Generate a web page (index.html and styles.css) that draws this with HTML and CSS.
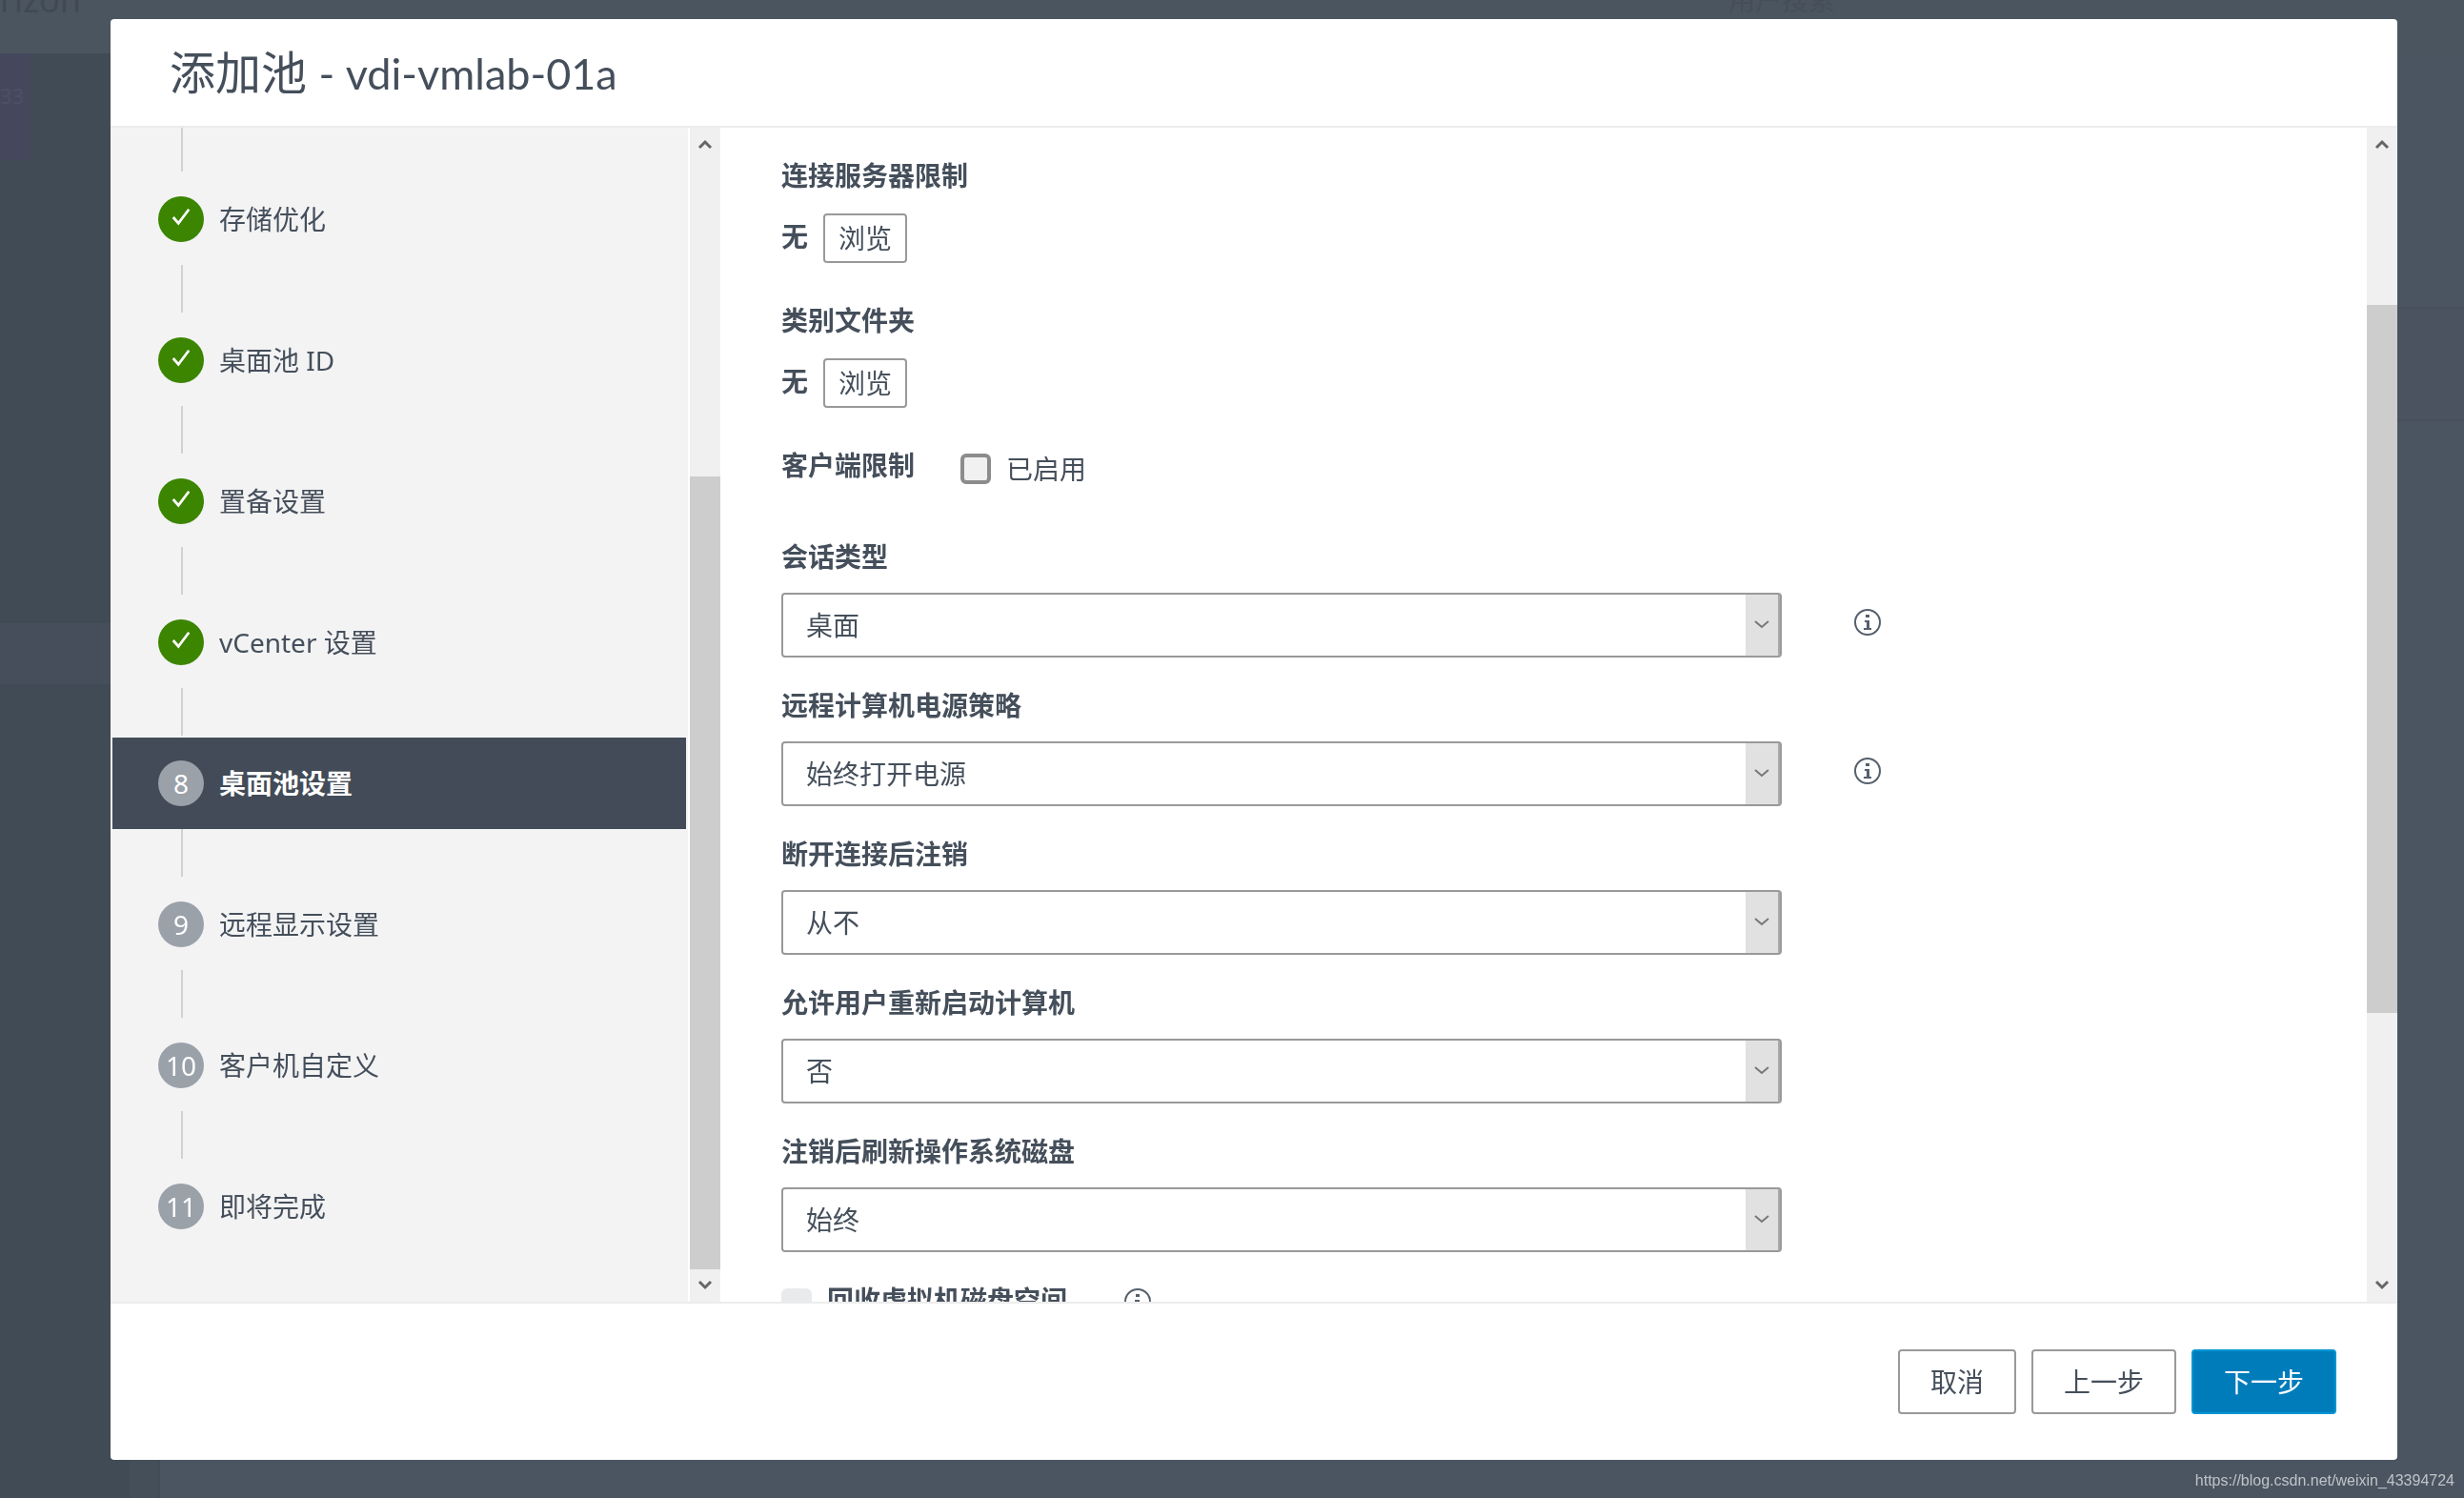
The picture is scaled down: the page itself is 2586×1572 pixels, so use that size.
FILE: index.html
```html
<!DOCTYPE html>
<html lang="zh-CN">
<head>
    <meta charset="UTF-8">
    <meta name="viewport" content="width=device-width, initial-scale=1.0">
    <title>添加池 - vdi-vmlab-01a</title>
    <link rel="stylesheet" href="styles.css">
</head>
<body>
    <svg class="symbols" aria-hidden="true">
        <symbol id="icon-check" viewBox="0 0 24 24">
            <path d="M3 12l6 7L21 3" fill="none" stroke="currentColor" stroke-width="3"/>
        </symbol>
        <symbol id="icon-up" viewBox="0 0 16 12">
            <path d="M2 10l6-6 6 6" fill="none" stroke="currentColor" stroke-width="3"/>
        </symbol>
        <symbol id="icon-down" viewBox="0 0 16 12">
            <path d="M2 2l6 6 6-6" fill="none" stroke="currentColor" stroke-width="3"/>
        </symbol>
        <symbol id="icon-chevron" viewBox="0 0 16 12">
            <path d="M1 2l7 6 7-6" fill="none" stroke="currentColor" stroke-width="2"/>
        </symbol>
        <symbol id="icon-info" viewBox="0 0 28 28">
            <circle cx="14" cy="14" r="13" fill="none" stroke="currentColor" stroke-width="2"/>
            <path d="M12 6h4v3h-4zM11 12h5v8h2v2h-8v-2h3v-6h-2z" fill="currentColor"/>
        </symbol>
    </svg>

    <!-- page behind the dialog -->
    <div class="app" aria-hidden="true">
        <div class="app-header">
            <span class="brand">rizon°</span>
            <span class="app-search">用户搜索</span>
        </div>
        <div class="app-body">
            <div class="app-nav">
                <div class="nav-badge">33</div>
                <div class="nav-current"></div>
            </div>
            <div class="app-gutter"></div>
            <div class="app-main">
                <div class="app-toolbar"></div>
            </div>
        </div>
    </div>

    <div class="modal" role="dialog" aria-labelledby="modalTitle">
        <div class="modal-header">
            <h1 id="modalTitle">添加池 <span>- vdi-vmlab-01a</span></h1>
        </div>
        <div class="modal-body">
            <div class="side">
                <ol class="steps">
                    <li class="step done"><span class="badge"><svg><use href="#icon-check"/></svg></span>存储优化</li>
                    <li class="step done"><span class="badge"><svg><use href="#icon-check"/></svg></span>桌面池 ID</li>
                    <li class="step done"><span class="badge"><svg><use href="#icon-check"/></svg></span>置备设置</li>
                    <li class="step done"><span class="badge"><svg><use href="#icon-check"/></svg></span>vCenter 设置</li>
                    <li class="step active"><span class="badge">8</span>桌面池设置</li>
                    <li class="step"><span class="badge">9</span>远程显示设置</li>
                    <li class="step"><span class="badge">10</span>客户机自定义</li>
                    <li class="step"><span class="badge">11</span>即将完成</li>
                </ol>
                <div class="scrollbar">
                    <svg><use href="#icon-up"/></svg>
                    <div class="track track-side"><div class="thumb"></div></div>
                    <svg><use href="#icon-down"/></svg>
                </div>
            </div>

            <form class="settings" id="poolForm">
                <div class="browse-field">
                    <h2>连接服务器限制</h2>
                    <div class="browse-row"><b>无</b><button type="button" class="btn btn-sm">浏览</button></div>
                </div>
                <div class="browse-field">
                    <h2>类别文件夹</h2>
                    <div class="browse-row"><b>无</b><button type="button" class="btn btn-sm">浏览</button></div>
                </div>
                <div class="client-row">
                    <h2>客户端限制</h2>
                    <input type="checkbox" id="clientLimit">
                    <label for="clientLimit">已启用</label>
                </div>
                <div class="field">
                    <label for="sessionType">会话类型</label>
                    <div class="field-row">
                        <div class="select-box">
                            <select id="sessionType"><option>桌面</option></select>
                            <span class="arrow"><svg><use href="#icon-chevron"/></svg></span>
                        </div>
                        <svg class="info"><use href="#icon-info"/></svg>
                    </div>
                </div>
                <div class="field">
                    <label for="powerPolicy">远程计算机电源策略</label>
                    <div class="field-row">
                        <div class="select-box">
                            <select id="powerPolicy"><option>始终打开电源</option></select>
                            <span class="arrow"><svg><use href="#icon-chevron"/></svg></span>
                        </div>
                        <svg class="info"><use href="#icon-info"/></svg>
                    </div>
                </div>
                <div class="field">
                    <label for="logoff">断开连接后注销</label>
                    <div class="field-row">
                        <div class="select-box">
                            <select id="logoff"><option>从不</option></select>
                            <span class="arrow"><svg><use href="#icon-chevron"/></svg></span>
                        </div>
                    </div>
                </div>
                <div class="field">
                    <label for="restart">允许用户重新启动计算机</label>
                    <div class="field-row">
                        <div class="select-box">
                            <select id="restart"><option>否</option></select>
                            <span class="arrow"><svg><use href="#icon-chevron"/></svg></span>
                        </div>
                    </div>
                </div>
                <div class="field">
                    <label for="refreshDisk">注销后刷新操作系统磁盘</label>
                    <div class="field-row">
                        <div class="select-box">
                            <select id="refreshDisk"><option>始终</option></select>
                            <span class="arrow"><svg><use href="#icon-chevron"/></svg></span>
                        </div>
                    </div>
                </div>
                <div class="reclaim-row">
                    <input type="checkbox" id="reclaim" disabled>
                    <label for="reclaim">回收虚拟机磁盘空间</label>
                    <svg class="info"><use href="#icon-info"/></svg>
                </div>
            </form>
            <div class="scrollbar">
                <svg><use href="#icon-up"/></svg>
                <div class="track track-main"><div class="thumb"></div></div>
                <svg><use href="#icon-down"/></svg>
            </div>
        </div>
        <div class="modal-footer">
            <button type="button" class="btn">取消</button>
            <button type="button" class="btn">上一步</button>
            <button type="submit" form="poolForm" class="btn btn-primary">下一步</button>
        </div>
    </div>

    <a class="watermark" href="https://blog.csdn.net/weixin_43394724">https://blog.csdn.net/weixin_43394724</a>
</body>
</html>
```

FILE: styles.css
```css
* {
    box-sizing: border-box;
}
body {
    margin: 0;
    height: 100vh;
    overflow: hidden;
    padding: 20px 70px 40px 116px;
    background-color: #4b5561;
    color: #454f5b;
    font-family: "Noto Sans", "Noto Sans CJK SC", sans-serif;
    font-size: 28px;
    line-height: 40px;
}
h1, h2 {
    margin: 0;
    font-size: 28px;
}
button, select {
    font: inherit;
    color: inherit;
}
.symbols {
    position: absolute;
    width: 0;
    height: 0;
}

/* page behind */
.app {
    position: fixed;
    inset: 0;
    display: flex;
    flex-direction: column;
}
.app-header {
    height: 56px;
    padding-right: 660px;
    display: flex;
    justify-content: space-between;
    overflow: hidden;
    background-color: #4b5560;
    color: #414954;
}
.brand {
    margin-top: -20px;
    font-size: 36px;
}
.app-search {
    margin-top: -20px;
    color: #454e59;
}
.app-body {
    flex: 1;
    display: flex;
}
.app-nav {
    width: 136px;
    background-color: #414b56;
}
.app-gutter {
    width: 32px;
    background-color: #454f5a;
    border-right: 2px solid #424b57;
}
.nav-badge {
    width: 32px;
    height: 112px;
    padding-top: 24px;
    background-color: #45485c;
    color: #4d5067;
    font-size: 22px;
}
.nav-current {
    height: 64px;
    margin-top: 486px;
    background-color: #474e5b;
}
.app-main {
    flex: 1;
    padding-top: 266px;
    background-color: #4b5561;
}
.app-toolbar {
    height: 120px;
    border-top: 2px solid #46505b;
    border-bottom: 2px solid #46505b;
    background-color: #4b5360;
}

/* dialog */
.modal {
    position: relative;
    height: 100%;
    display: flex;
    flex-direction: column;
    background-color: #fff;
    border-radius: 4px;
    overflow: hidden;
}
.modal-header {
    height: 114px;
    padding: 20px 62px;
    border-bottom: 2px solid #ececec;
}
.modal-header h1 {
    font-size: 48px;
    font-weight: 400;
    line-height: 72px;
}
.modal-header span {
    font-family: Lato, sans-serif;
    font-size: 45px;
}
.modal-body {
    flex: 1;
    min-height: 0;
    display: flex;
    overflow: hidden;
}
.side {
    width: 640px;
    display: flex;
    background-color: #f3f3f4;
}
.steps {
    flex: 1;
    margin: 0;
    padding: 0 2px;
    list-style: none;
}
.step {
    height: 96px;
    margin-bottom: 52px;
    padding-left: 48px;
    display: flex;
    align-items: center;
    gap: 16px;
    position: relative;
}
.step:first-child {
    margin-top: 48px;
}
.step::before {
    content: "";
    position: absolute;
    left: 72px;
    top: -52px;
    width: 2px;
    height: 50px;
    background-color: #cfd2d5;
}
.badge {
    width: 48px;
    height: 48px;
    border-radius: 50%;
    display: flex;
    align-items: center;
    justify-content: center;
    background-color: #9aa1a9;
    color: #fff;
}
.badge svg {
    width: 22px;
    height: 22px;
    margin-bottom: 4px;
}
.done .badge {
    background-color: #3c8500;
}
.active {
    background-color: #424b57;
    color: #fff;
    font-weight: 700;
}
.active .badge {
    font-weight: 400;
}

.scrollbar {
    width: 32px;
    display: flex;
    flex-direction: column;
    align-items: center;
    background-color: #f0f0f0;
    color: #666;
}
.side .scrollbar {
    border-left: 2px solid #fff;
    width: 34px;
}
.scrollbar svg {
    width: 16px;
    height: 34px;
}
.track {
    flex: 1;
    align-self: stretch;
    display: flex;
}
.track-side {
    padding-top: 332px;
}
.track-main {
    padding: 152px 0 269px;
}
.thumb {
    flex: 1;
    background-color: #cdcdcd;
}

.settings {
    flex: 1;
    overflow: hidden;
    padding: 30px 64px 0;
}
.browse-field {
    height: 152px;
}
.browse-row {
    display: flex;
    gap: 16px;
    padding-top: 20px;
}
.browse-row b {
    padding-top: 4px;
}
input[type="checkbox"] {
    appearance: none;
    width: 32px;
    height: 32px;
    margin: 0 16px 0 0;
    border: 4px solid #8c8c8c;
    border-radius: 6px;
    background-color: #f1f1f1;
}
input[type="checkbox"]:disabled {
    border-color: #e9eaeb;
    background-color: #e9eaeb;
}
.client-row {
    display: flex;
    align-items: center;
    gap: 48px;
    margin-bottom: 56px;
}
.client-row input {
    margin: 4px -32px 0 0;
}
.client-row label {
    padding-top: 4px;
}
.client-row h2 {
    padding-bottom: 4px;
}
.field {
    margin-bottom: 30px;
}
.field label, .reclaim-row label {
    display: block;
    font-weight: 700;
}
.client-row + .field {
    margin-top: -4px;
}
.field-row {
    display: flex;
    gap: 76px;
    margin-top: 18px;
}
.select-box {
    position: relative;
    width: 100%;
    max-width: 1050px;
}
.select-box select {
    appearance: none;
    display: block;
    width: 100%;
    height: 68px;
    padding: 0 24px;
    border: 2px solid #999;
    border-radius: 4px;
    background-color: #fff;
}
.arrow {
    position: absolute;
    top: 2px;
    right: 2px;
    bottom: 2px;
    width: 36px;
    display: flex;
    align-items: center;
    justify-content: center;
    background-color: #e1e1e1;
    border-right: 2px solid #aaa;
    color: #777;
    pointer-events: none;
}
.arrow svg {
    width: 16px;
    height: 12px;
}
.info {
    flex: none;
    width: 28px;
    height: 28px;
    margin-top: 17px;
    color: #56606c;
}
.reclaim-row {
    display: flex;
    align-items: flex-start;
    padding-top: 8px;
}
.reclaim-row label {
    margin-top: -8px;
}
.reclaim-row .info {
    margin: 0 0 0 60px;
}

.btn {
    height: 68px;
    padding: 0 32px;
    border: 2px solid #999;
    border-radius: 4px;
    background-color: #fff;
}
.btn-sm {
    height: 52px;
    padding: 0 14px;
    line-height: 28px;
}
.btn-primary {
    border-color: #0095d3;
    background-color: #007cbb;
    color: #fff;
}
.modal-footer {
    height: 166px;
    padding: 48px 64px;
    display: flex;
    justify-content: flex-end;
    gap: 16px;
    border-top: 2px solid #ececec;
}
.watermark {
    position: fixed;
    right: 10px;
    bottom: 8px;
    font-family: "Liberation Sans", Arial, sans-serif;
    font-size: 16px;
    line-height: 20px;
    color: #bfc3c8;
    text-decoration: none;
}
```
